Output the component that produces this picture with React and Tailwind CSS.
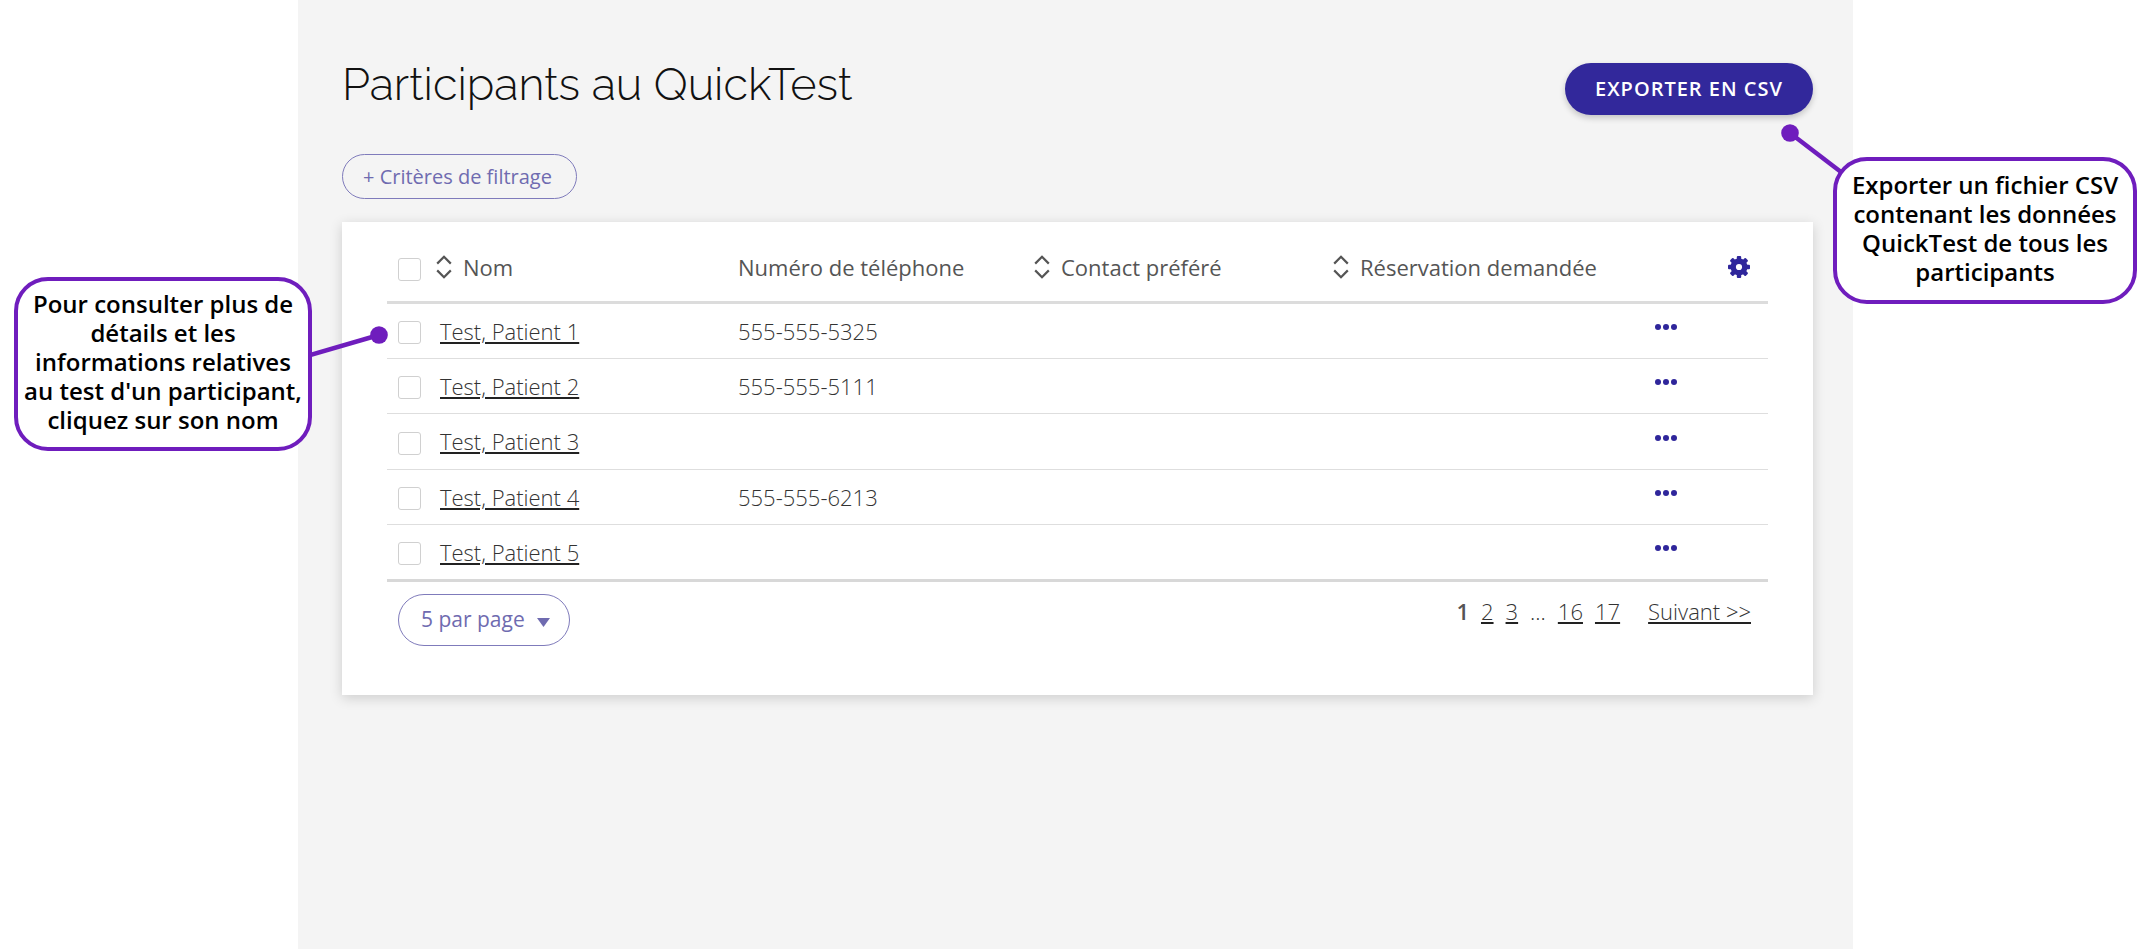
import React from "react";

const rows = [
  { name: "Test, Patient 1", phone: "555-555-5325" },
  { name: "Test, Patient 2", phone: "555-555-5111" },
  { name: "Test, Patient 3", phone: "" },
  { name: "Test, Patient 4", phone: "555-555-6213" },
  { name: "Test, Patient 5", phone: "" },
];

function SortIcon() {
  return (
    <svg width="16" height="24" viewBox="0 0 16 24" fill="none" stroke="#555" strokeWidth="2.200" className="shrink-0" aria-hidden="true">
      <path d="M1.2 8.6 8 1.8l6.800 6.800M1.200 15.400 8 22.200l6.800-6.800" />
    </svg>
  );
}

function SortHeader({ label }) {
  return (
    <button type="button" className="flex items-center gap-[11px]">
      <SortIcon />
      {label}
    </button>
  );
}

function Gear() {
  return (
    <svg width="22" height="22" viewBox="0 0 22 22" aria-hidden="true">
      <g fill="#2f269b">
        {[0, 45, 90, 135].map((a) => (
          <rect key={a} x="8.800" y="0" width="4.400" height="22" rx="1" transform={`rotate(${a} 11 11)`} />
        ))}
        <circle cx="11" cy="11" r="8.500" />
      </g>
      <circle cx="11" cy="11" r="3.100" fill="#fff" />
    </svg>
  );
}

function Dots() {
  return (
    <svg width="22" height="6" viewBox="0 0 22 6" fill="#2f269b" aria-hidden="true">
      <circle cx="3" cy="3" r="3" />
      <circle cx="11" cy="3" r="3" />
      <circle cx="19" cy="3" r="3" />
    </svg>
  );
}

function Check({ label }) {
  return (
    <input
      type="checkbox"
      aria-label={label}
      className="mt-1 block size-[23px] appearance-none rounded-[3px] border border-[#d0d0d0] bg-white checked:bg-[#2f269b]"
    />
  );
}

function PageLink({ children }) {
  return (
    <a href="#page" className="underline decoration-[#222] decoration-2 underline-offset-2">
      {children}
    </a>
  );
}

export default function App() {
  return (
    <div className="flex min-h-screen bg-white font-['Open_Sans',sans-serif] text-[#333]">
      <div className="w-[298px] shrink-0" />
      <main className="relative min-w-0 flex-1 bg-[#f4f4f4] pt-[54px] pr-10 pl-11">
        <header className="flex items-start justify-between">
          <h1 className="font-['Raleway','Lato',sans-serif] text-[45px] leading-[62px] font-light text-[#111]">
            Participants au QuickTest
          </h1>
          <button
            type="button"
            className="mt-[9px] h-[52px] rounded-full bg-[#32289b] px-[30px] text-[20px] font-semibold tracking-[1px] text-white shadow-[0_3px_6px_rgba(0,0,0,0.2)]"
          >
            EXPORTER EN CSV
          </button>
        </header>
        <button
          type="button"
          className="mt-[38px] flex h-[45px] items-center rounded-full border border-[#7f7bbb] pr-6 pl-5 text-[20px] text-[#6f6bb0]"
        >
          + Critères de filtrage
        </button>

        <section className="mt-[23px] bg-white px-[45px] pb-[49px] shadow-[0_3px_12px_rgba(0,0,0,0.16)]">
          <table className="w-full table-fixed border-collapse text-left text-[22px] leading-[30px]">
            <colgroup>
              <col className="w-[49px]" />
              <col className="w-[302px]" />
              <col className="w-[296px]" />
              <col className="w-[299px]" />
              <col />
              <col className="w-[113px]" />
            </colgroup>
            <thead>
              <tr className="h-[80px] border-b-[3px] border-[#dcdcdc] text-[#555]">
                <th className="pt-3 pl-[11px]"><Check label="Tout sélectionner" /></th>
                <th className="pt-3 font-normal"><SortHeader label="Nom" /></th>
                <th className="pt-3 font-normal">Numéro de téléphone</th>
                <th className="pt-3 font-normal"><SortHeader label="Contact préféré" /></th>
                <th className="pt-3 font-normal"><SortHeader label="Réservation demandée" /></th>
                <th className="pt-3 pr-[18px]">
                  <button type="button" aria-label="Paramètres" className="ml-auto block"><Gear /></button>
                </th>
              </tr>
            </thead>
            <tbody className="border-b-[3px] border-[#d8d8d8] font-light">
              {rows.map((r) => (
                <tr key={r.name} className="h-[55px] border-b border-[#dedede] last:border-b-0 odd:h-[56px]">
                  <td className="pl-[11px]"><Check label={r.name} /></td>
                  <td className="pl-1"><PageLink>{r.name}</PageLink></td>
                  <td>{r.phone}</td>
                  <td />
                  <td />
                  <td>
                    <button type="button" aria-label="Actions" className="mb-[7px] block"><Dots /></button>
                  </td>
                </tr>
              ))}
            </tbody>
          </table>
          <div className="flex items-start justify-between pt-3 pr-[17px] pl-[11px] text-[22px] leading-[30px]">
            <div className="relative">
              <select
                aria-label="Résultats par page"
                className="h-[52px] w-[172px] appearance-none rounded-full border border-[#7f7bbb] bg-white pb-0.5 pl-[22px] text-[21px] text-[#6f6bb0]"
              >
                <option>5 par page</option>
              </select>
              <svg width="13" height="9" viewBox="0 0 13 9" className="pointer-events-none absolute top-6 right-5" fill="#6f6bb0" aria-hidden="true">
                <path d="M0 0h13L6.500 9z" />
              </svg>
            </div>
            <nav aria-label="Pagination" className="mt-0.5 flex gap-3 font-light">
              <span className="font-semibold text-[#555]">1</span>
              <PageLink>2</PageLink>
              <PageLink>3</PageLink>
              <span>...</span>
              <PageLink>16</PageLink>
              <PageLink>17</PageLink>
              <span className="ml-4"><PageLink>Suivant &gt;&gt;</PageLink></span>
            </nav>
          </div>
        </section>

        <aside className="absolute top-[277px] right-full mr-[-14px] flex h-[174px] w-[298px] items-center justify-center rounded-[34px] border-4 border-[#6f1dbd] bg-white text-center text-[24px] leading-[29px] font-semibold text-black">
          <p className="pb-[5px]">
            Pour consulter plus de<br />détails et les<br />informations relatives<br />
            <span className="whitespace-nowrap">au test d'un participant,</span><br />cliquez sur son nom
          </p>
          <svg width="78" height="34" viewBox="0 0 78 34" className="absolute top-[45px] left-[292px]" aria-hidden="true">
            <path d="M0 29 69 9" stroke="#6f1dbd" strokeWidth="4.500" />
            <circle cx="69" cy="9" r="8.800" fill="#6f1dbd" />
          </svg>
        </aside>
        <aside className="absolute top-[157px] left-full ml-[-20px] flex h-[147px] w-[304px] items-center justify-center rounded-[34px] border-4 border-[#6f1dbd] bg-white text-center text-[24px] leading-[29px] font-semibold text-black">
          <p className="pb-[5px]">
            <span className="whitespace-nowrap">Exporter un fichier CSV</span><br />contenant les données<br />QuickTest de tous les<br />participants
          </p>
          <svg width="64" height="52" viewBox="0 0 64 52" className="absolute top-[-37px] left-[-56px]" aria-hidden="true">
            <path d="M9 9 60 48" stroke="#6f1dbd" strokeWidth="4.500" />
            <circle cx="9" cy="9" r="8.800" fill="#6f1dbd" />
          </svg>
        </aside>
      </main>
      <div className="w-[303px] shrink-0" />
    </div>
  );
}
